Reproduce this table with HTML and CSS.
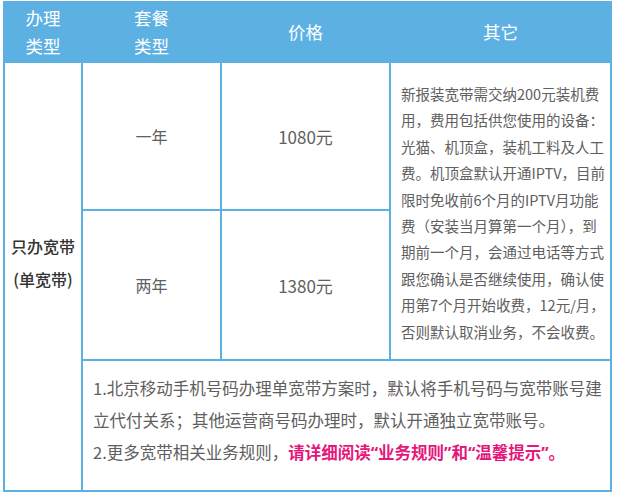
FILE: index.html
```html
<!DOCTYPE html>
<html lang="zh-CN">
<head>
<meta charset="utf-8">
<title>只办宽带</title>
<link rel="stylesheet" href="styles.css">
</head>
<body>
<div class="table">
  <div class="head c1">办理<br>类型</div>
  <div class="head c2">套餐<br>类型</div>
  <div class="head c3">价格</div>
  <div class="head c4">其它</div>

  <div class="cell type"><div class="type-text">只办宽带<br>(单宽带)</div></div>

  <div class="cell plan r1">一年</div>
  <div class="cell price r1">1080元</div>
  <div class="cell plan r2">两年</div>
  <div class="cell price r2">1380元</div>

  <div class="cell other"><div>新报装宽带需交纳200元装机费<br>用，费用包括供您使用的设备：<br>光猫、机顶盒，装机工料及人工<br>费。机顶盒默认开通IPTV，目前<br>限时免收前6个月的IPTV月功能<br>费（安装当月算第一个月），到<br>期前一个月，会通过电话等方式<br>跟您确认是否继续使用，确认使<br>用第7个月开始收费，12元/月，<br>否则默认取消业务，不会收费。</div></div>

  <div class="cell note"><div class="note-text">1.北京移动手机号码办理单宽带方案时，默认将手机号码与宽带账号建<br>立代付关系；其他运营商号码办理时，默认开通独立宽带账号。<br>2.更多宽带相关业务规则，<span class="hl">请详细阅读“业务规则”和“温馨提示”。</span></div></div>
</div>
</body>
</html>
```
FILE: styles.css
```css
html, body {
  margin: 0;
  padding: 0;
  background: #ffffff;
}

body {
  font-family: "Noto Sans CJK SC", "Noto Sans", sans-serif;
  color: #606060;
}

.table {
  margin: 1px 0 0 3px;
  width: 609px;
  box-sizing: border-box;
  display: grid;
  grid-template-columns: 76px 137px 167px 219px;
  grid-template-rows: 58px 146px 148px 129px;
  gap: 2px;
  padding: 2px;
  background: #5cb0e2;
}

.head {
  background: #5cb0e2;
  color: #ffffff;
  font-size: 17.5px;
  line-height: 28px;
  display: flex;
  align-items: center;
  justify-content: center;
  text-align: center;
}

.c1 { grid-column: 1; grid-row: 1; }
.c2 { grid-column: 2; grid-row: 1; }
.c3 { grid-column: 3; grid-row: 1; }
.c4 { grid-column: 4; grid-row: 1; }

.cell {
  background: #ffffff;
  display: flex;
  align-items: center;
  justify-content: center;
}

.type {
  grid-column: 1;
  grid-row: 2 / 5;
}

.type-text {
  color: #333333;
  font-size: 16px;
  font-weight: 500;
  line-height: 33px;
  text-align: center;
  margin-bottom: 28px;
}

.plan {
  grid-column: 2;
  font-size: 16px;
}

.price {
  grid-column: 3;
  font-size: 17px;
}

.r1 { grid-row: 2; }
.r2 { grid-row: 3; }

.other {
  grid-column: 4;
  grid-row: 2 / 4;
  justify-content: flex-start;
  padding: 4px 0 0 10px;
  font-size: 14.5px;
  line-height: 26.4px;
  white-space: nowrap;
}

.note {
  grid-column: 2 / 5;
  grid-row: 4;
  justify-content: flex-start;
  align-items: flex-start;
  padding: 11px 0 0 10px;
}

.note-text {
  font-size: 16.5px;
  line-height: 32px;
  white-space: nowrap;
}

.hl {
  font-family: "Noto Sans", "Noto Sans CJK SC", sans-serif;
  color: #e5177b;
  font-weight: 700;
}
```
